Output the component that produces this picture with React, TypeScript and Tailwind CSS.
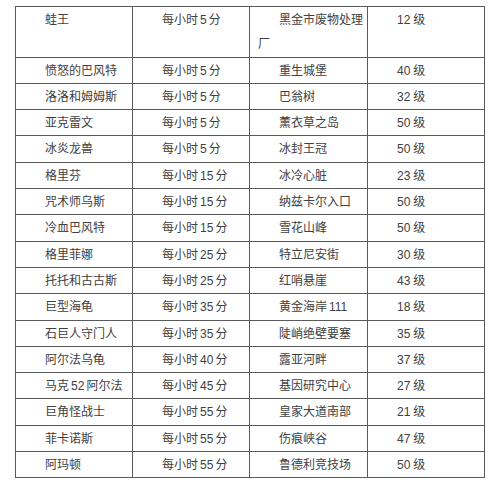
import React from "react";

const rows: [string, string, string, string][] = [
  ["蛙王", "5", "黑金市废物处理厂", "12"],
  ["愤怒的巴风特", "5", "重生城堡", "40"],
  ["洛洛和姆姆斯", "5", "巴翁树", "32"],
  ["亚克雷文", "5", "薰衣草之岛", "50"],
  ["冰炎龙兽", "5", "冰封王冠", "50"],
  ["格里芬", "15", "冰冷心脏", "23"],
  ["咒术师乌斯", "15", "纳兹卡尔入口", "50"],
  ["冷血巴风特", "15", "雪花山峰", "50"],
  ["格里菲娜", "25", "特立尼安街", "30"],
  ["托托和古古斯", "25", "红哨悬崖", "43"],
  ["巨型海龟", "35", "黄金海岸111", "18"],
  ["石巨人守门人", "35", "陡峭绝壁要塞", "35"],
  ["阿尔法乌龟", "40", "露亚河畔", "37"],
  ["马克52阿尔法", "45", "基因研究中心", "27"],
  ["巨角怪战士", "55", "皇家大道南部", "21"],
  ["菲卡诺斯", "55", "伤痕峡谷", "47"],
  ["阿玛顿", "55", "鲁德利竞技场", "50"],
];

const cell =
  "border border-[#5a5a5a] align-top pl-[8px] pr-[4px] pt-[1px] pb-0 indent-[21px] leading-[24.3px] text-left";

function Name({ s }: { s: string }) {
  if (s.startsWith("马克52")) {
    return (
      <>
        马克<span className="px-[2px]">52</span>阿尔法
      </>
    );
  }
  return <>{s}</>;
}

function Place({ s }: { s: string }) {
  if (s.endsWith("111")) {
    return (
      <>
        黄金海岸<span className="pl-[2px]">111</span>
      </>
    );
  }
  return <>{s}</>;
}

export default function App() {
  return (
    <div
      className="w-[500px] h-[485px] bg-white pt-[6px] pl-[15px] text-[12px] text-[#404040]"
      style={{ fontFamily: '"Liberation Sans", "Noto Sans CJK SC", sans-serif' }}
    >
      <table className="table-fixed border-collapse w-[469px]">
        <colgroup>
          <col className="w-[117px]" />
          <col className="w-[117px]" />
          <col className="w-[118px]" />
          <col className="w-[117px]" />
        </colgroup>
        <tbody>
          {rows.map((r, i) => (
            <tr key={i}>
              <td className={cell}>
                <Name s={r[0]} />
              </td>
              <td className={cell}>
                每小时<span className="px-[2px]">{r[1]}</span>分
              </td>
              <td className={cell}>
                <Place s={r[2]} />
              </td>
              <td className={cell}>
                {r[3]}
                <span className="pl-[3px]">级</span>
              </td>
            </tr>
          ))}
        </tbody>
      </table>
    </div>
  );
}
